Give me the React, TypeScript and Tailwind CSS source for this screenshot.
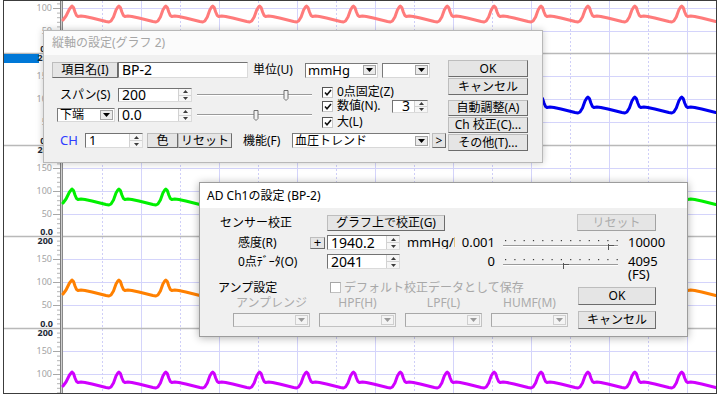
import React from 'react'

const font = "font-['Noto_Sans','Noto_Sans_CJK_JP',sans-serif]"

// graph tops (page y) and trace colours
const TOPS = [-38, 53, 145, 236, 328]
const COLORS = ['#ff7b7b', '#0000f0', '#00f000', '#ff8000', '#d000ff']

// one beat of the pulse wave, [dx from peak, dy from graph top]
const SHAPE: [number, number][] = [
  [0, 44], [1.5, 45.5], [3, 50], [4.5, 53.5], [6, 54.5], [9, 54], [13, 54.5],
  [20, 56], [28, 58], [34, 59.5], [37, 60], [39, 59], [41.5, 55], [44, 48], [46, 44.8],
]

function tracePoints(t: number) {
  const pts: string[] = [`63,${t + 58}`, `66,${t + 54}`, `69.5,${t + 47}`]
  for (let p = 72; p < 720; p += 46.9) {
    for (const [dx, dy] of SHAPE) {
      const x = p + dx
      if (x > 717) break
      pts.push(`${x.toFixed(1)},${t + dy}`)
    }
  }
  return pts.join(' ')
}

function Chart() {
  const vlines = Array.from({ length: 17 }, (_, k) => 63 + 39 * k).filter((x) => x > 63 && x < 716)
  return (
    <div className="w-[714px] h-[394px] border border-[#3c3c3c] overflow-hidden">
      <svg width="712" height="392" viewBox="4 1 712 392">
        <rect x="4" y="1" width="712" height="392" fill="#fff" />
        {TOPS.map((t) => (
          <g key={t}>
            {[23, 46, 69].map((d) => (
              <line key={d} x1="63" x2="716" y1={t + d + 0.5} y2={t + d + 0.5} stroke="#d4d4fb" strokeWidth="1" />
            ))}
          </g>
        ))}
        {vlines.map((x) => {
          const k = Math.round((x - 63) / 39)
          return (
            <line
              key={x}
              x1={x + 0.5}
              x2={x + 0.5}
              y1="1"
              y2="393"
              stroke={k % 2 ? '#cfcff8' : '#d4d4fb'}
              strokeDasharray={k % 2 ? '2 2' : undefined}
            />
          )
        })}
        {[...TOPS, 419].map((t) => (
          <line key={t} x1="4" x2="716" y1={t + 0.5} y2={t + 0.5} stroke="#b9b9b9" strokeWidth="1.5" />
        ))}
        <rect x="4" y="54" width="35" height="9" fill="#0078d7" />
        {TOPS.map((t) => (
          <g key={t} fontFamily="Noto Sans, sans-serif">
            {Array.from({ length: 20 }, (_, i) => t + i * 4.6).map((y) => (
              <line key={y} x1="57" x2="60" y1={y + 0.5} y2={y + 0.5} stroke="#b4b4b4" />
            ))}
            {[['150', 23], ['100', 46], ['50', 69]]
              .filter(([, d]) => t + +d > 4)
              .map(([s, d]) => (
                <g key={s}>
                  <line x1="53" x2="60" y1={t + +d + 0.5} y2={t + +d + 0.5} stroke="#a8a8a8" />
                  <text x="52" y={t + +d + 3} fontSize="9" fill="#a4a4a4" textAnchor="end">
                    {s}
                  </text>
                </g>
              ))}
            {t > 0 && (
              <>
                <text x="53" y={t - 1.5} fontSize="9" fontWeight="bold" fill="#1e2a36" textAnchor="end">
                  0.0
                </text>
                <text x="53" y={t + 8} fontSize="9" fontWeight="bold" fill="#1e2a36" textAnchor="end">
                  200
                </text>
              </>
            )}
          </g>
        ))}
        <rect x="60" y="1" width="3" height="392" fill="#cfcfcf" />
        <line x1="60.5" x2="60.5" y1="1" y2="393" stroke="#7c7c7c" />
        <line x1="62.5" x2="62.5" y1="1" y2="393" stroke="#8a8a8a" />
        {TOPS.map((t, i) => (
          <polyline
            key={t}
            points={tracePoints(t)}
            fill="none"
            stroke={COLORS[i]}
            strokeWidth="3"
            strokeLinejoin="round"
            strokeLinecap="round"
          />
        ))}
      </svg>
    </div>
  )
}

function Btn({ className = '', disabled = false, children }: { className?: string; disabled?: boolean; children?: React.ReactNode }) {
  return (
    <div
      className={`flex items-center justify-center shrink-0 border bg-[#e5e5e5] text-[12px] leading-none whitespace-nowrap ${
        disabled
          ? 'text-[#acacac] border-[#c4c4c4] border-r-[#a2a2a2] border-b-[#a2a2a2]'
          : 'text-black border-[#bdbdbd] border-r-[#6c6c6c] border-b-[#6c6c6c]'
      } ${className}`}
    >
      {children}
    </div>
  )
}

function TextBox({ className = '', children }: { className?: string; children?: React.ReactNode }) {
  return (
    <div className={`flex items-center shrink-0 border border-[#737373] border-r-[#dadada] border-b-[#dadada] bg-white pl-[3px] text-[14px] leading-none ${className}`}>
      {children}
    </div>
  )
}

function SpinArrows() {
  return (
    <div className="flex flex-col w-[13px] h-full border-l border-[#d2d2d2] bg-[#f6f6f6] shrink-0">
      <div className="flex-1 flex items-center justify-center">
        <svg width="5" height="3" viewBox="0 0 5 3">
          <path d="M0 3L2.5 0L5 3Z" fill="#3c3c3c" />
        </svg>
      </div>
      <div className="h-px bg-[#d2d2d2]" />
      <div className="flex-1 flex items-center justify-center">
        <svg width="5" height="3" viewBox="0 0 5 3">
          <path d="M0 0H5L2.5 3Z" fill="#3c3c3c" />
        </svg>
      </div>
    </div>
  )
}

function SpinBox({ className = '', children }: { className?: string; children?: React.ReactNode }) {
  return (
    <div className={`flex shrink-0 border border-[#737373] border-r-[#dadada] border-b-[#dadada] bg-white ${className}`}>
      <div className="flex-1 flex items-center pl-[3px] text-[14px] leading-none">{children}</div>
      <SpinArrows />
    </div>
  )
}

function Select({ className = '', disabled = false, children }: { className?: string; disabled?: boolean; children?: React.ReactNode }) {
  return (
    <div
      className={`flex items-center shrink-0 border ${
        disabled ? 'border-[#c2c2c2] border-t-[#a8a8a8] border-l-[#a8a8a8] bg-[#f3f3f3]' : 'border-[#7a7a7a] border-r-[#d8d8d8] border-b-[#d8d8d8] bg-white'
      } ${className}`}
    >
      <div className="flex-1 pl-[2px] text-[12px] leading-none whitespace-nowrap">{children}</div>
      <div className={`w-[13px] h-[10px] mr-[1px] flex items-center justify-center border ${disabled ? 'border-[#cfcfcf] bg-[#f4f4f4]' : 'border-[#a4a4a4] bg-[#ebebeb]'}`}>
        <svg width="7" height="4" viewBox="0 0 7 4">
          <path d="M0 0H7L3.5 4Z" fill={disabled ? '#9a9a9a' : '#000'} />
        </svg>
      </div>
    </div>
  )
}

function Check({ checked = false, disabled = false }: { checked?: boolean; disabled?: boolean }) {
  return (
    <div
      className={`w-[11px] h-[11px] shrink-0 border bg-white flex items-center justify-center ${
        disabled ? 'border-[#c0c0c0] border-t-[#a6a6a6] border-l-[#a6a6a6]' : 'border-[#c8c8c8] border-t-[#555] border-l-[#555]'
      }`}
    >
      {checked && (
        <svg width="8" height="7" viewBox="0 0 8 7">
          <path d="M1 3.5L3 5.7L7 1" stroke="#111" strokeWidth="1.6" fill="none" />
        </svg>
      )}
    </div>
  )
}

function Slider({ thumb }: { thumb: number }) {
  return (
    <svg width="115" height="14" viewBox="0 0 115 14" className="shrink-0">
      <line x1="0" x2="115" y1="6.5" y2="6.5" stroke="#9a9a9a" />
      <line x1="0" x2="115" y1="7.5" y2="7.5" stroke="#ffffff" />
      <path d={`M${thumb - 2} 2.5H${thumb + 2}V10.5L${thumb} 12.5L${thumb - 2} 10.5Z`} fill="#f2f2f2" stroke="#6e6e6e" />
    </svg>
  )
}

function TickSlider({ thumb }: { thumb: number }) {
  const dots = Array.from({ length: 13 }, (_, i) => 2 + i * 9.3)
  return (
    <svg width="115" height="15" viewBox="0 0 115 15" className="shrink-0">
      {dots.map((x) => (
        <rect key={x} x={x} y="5" width="1.2" height="1.2" fill="#3a3a3a" />
      ))}
      <line x1="0" x2="115" y1="10.5" y2="10.5" stroke="#9a9a9a" />
      <line x1="0" x2="115" y1="11.5" y2="11.5" stroke="#ffffff" />
      <line x1={thumb + 0.5} x2={thumb + 0.5} y1="9" y2="15" stroke="#555" />
      <line x1={thumb + 0.5} x2={thumb + 6} y1="10.5" y2="10.5" stroke="#555" />
    </svg>
  )
}

function AxisDialog() {
  return (
    <div className="absolute left-[43px] top-[30px] w-[500px] h-[133px] border border-[#b8b8b8] bg-[#f0f0f0] shadow-[0_0_7px_rgba(0,0,0,0.22)] flex flex-col text-[12px] leading-none">
      <div className="h-[24px] bg-[#fbfbfb] flex items-center pl-[8px] text-[#a6a6a6]">縦軸の設定(グラフ 2)</div>
      <div className="flex-1 flex pl-[8px]">
        <div className="w-[395px] flex flex-col pt-[7px]">
          <div className="flex items-center h-[16px]">
            <Btn className="w-[66px] h-[16px]">項目名(I)</Btn>
            <TextBox className="w-[130px] h-[16px]">BP-2</TextBox>
            <span className="ml-[5px] w-[52px]">単位(U)</span>
            <Select className="w-[73px] h-[15px]">
              <span className="text-[13px]">mmHg</span>
            </Select>
            <Select className="ml-[4px] w-[48px] h-[15px]" />
          </div>
          <div className="flex mt-[7px]">
            <div className="w-[270px] flex flex-col pt-[3px] gap-[6px]">
              <div className="flex items-center h-[14px]">
                <span className="w-[66px] pl-[8px]">スパン(S)</span>
                <SpinBox className="w-[74px] h-[14px]">200</SpinBox>
                <div className="ml-[5px]">
                  <Slider thumb={89} />
                </div>
              </div>
              <div className="flex items-center h-[14px]">
                <Select className="ml-[5px] w-[58px] h-[14px]">下端</Select>
                <SpinBox className="ml-[3px] w-[74px] h-[14px]">0.0</SpinBox>
                <div className="ml-[5px]">
                  <Slider thumb={59} />
                </div>
              </div>
            </div>
            <div className="flex flex-col">
              <div className="flex items-center h-[14px]">
                <Check checked />
                <span className="ml-[4px]">0点固定(Z)</span>
              </div>
              <div className="flex items-center h-[14px]">
                <Check checked />
                <span className="ml-[4px] w-[55px]">数値(N).</span>
                <SpinBox className="w-[36px] h-[13px]">
                  <span className="pl-[6px]">3</span>
                </SpinBox>
              </div>
              <div className="flex items-center h-[14px] mt-[2px]">
                <Check checked />
                <span className="ml-[4px]">大(L)</span>
              </div>
            </div>
          </div>
          <div className="flex items-center h-[15px] mt-[4px]">
            <span className="w-[33px] pl-[8px] text-[13px] text-[#2f3cff]">CH</span>
            <SpinBox className="w-[58px] h-[15px]">
              <span className="text-[13px]">1</span>
            </SpinBox>
            <Btn className="ml-[4px] w-[31px] h-[15px]">色</Btn>
            <Btn className="w-[54px] h-[15px]">リセット</Btn>
            <span className="ml-[11px] w-[49px]">機能(F)</span>
            <Select className="w-[138px] h-[15px]">血圧トレンド</Select>
            <Btn className="ml-[2px] w-[14px] h-[15px]">&gt;</Btn>
          </div>
        </div>
        <div className="ml-[1px] flex flex-col pt-[5px]">
          <Btn className="w-[80px] h-[17px]">OK</Btn>
          <Btn className="mt-[1px] w-[80px] h-[17px]">キャンセル</Btn>
          <Btn className="mt-[5px] w-[80px] h-[16px]">自動調整(A)</Btn>
          <Btn className="mt-[1px] w-[80px] h-[16px]">Ch 校正(C)...</Btn>
          <Btn className="mt-[1px] w-[80px] h-[17px]">その他(T)...</Btn>
        </div>
      </div>
    </div>
  )
}

function AdDialog() {
  return (
    <div className="absolute left-[199px] top-[182px] w-[489px] h-[155px] border border-[#9c9c9c] bg-[#f0f0f0] shadow-[0_1px_8px_rgba(0,0,0,0.3)] flex flex-col text-[12px] leading-none">
      <div className="h-[25px] bg-white flex items-center pl-[7px] text-black">AD Ch1の設定 (BP-2)</div>
      <div className="flex-1 flex flex-col">
        <div className="flex items-center h-[17px] mt-[6px]">
          <span className="w-[127px] pl-[20px]">センサー校正</span>
          <Btn className="w-[118px] h-[16px]">グラフ上で校正(G)</Btn>
          <Btn disabled className="ml-[132px] w-[79px] h-[17px]">
            リセット
          </Btn>
        </div>
        <div className="flex items-center h-[15px] mt-[4px]">
          <span className="w-[110px] pl-[38px]">感度(R)</span>
          <Btn className="w-[15px] h-[12px] text-[13px]">+</Btn>
          <SpinBox className="ml-[2px] w-[73px] h-[15px]">1940.2</SpinBox>
          <span className="ml-[7px] w-[48px] overflow-hidden whitespace-nowrap text-[13px]">mmHg/l</span>
          <span className="w-[40px] text-right text-[13px]">0.001</span>
          <div className="ml-[8px]">
            <TickSlider thumb={105} />
          </div>
          <span className="ml-[10px] text-[13px]">10000</span>
        </div>
        <div className="flex items-center h-[15px] mt-[4px]">
          <span className="w-[127px] pl-[38px]">0点ﾃﾞｰﾀ(O)</span>
          <SpinBox className="w-[73px] h-[15px]">2041</SpinBox>
          <span className="w-[95px] text-right text-[13px]">0</span>
          <div className="ml-[8px]">
            <TickSlider thumb={60} />
          </div>
          <span className="ml-[10px] text-[13px]">4095</span>
        </div>
        <div className="h-[11px] mt-[1px] pl-[428px] flex items-end text-[13px]">(FS)</div>
        <div className="flex">
          <div className="w-[378px] flex flex-col">
            <div className="flex items-center h-[13px]">
              <span className="w-[130px] pl-[18px]">アンプ設定</span>
              <Check disabled />
              <span className="ml-[3px] text-[#a8a8a8]">デフォルト校正データとして保存</span>
            </div>
            <div className="flex gap-[9px] pl-[33px] mt-[3px] h-[12px] text-[#ababab]">
              <span className="w-[77px] text-center">アンプレンジ</span>
              <span className="w-[77px] text-center">HPF(H)</span>
              <span className="w-[77px] text-center">LPF(L)</span>
              <span className="w-[77px] text-center">HUMF(M)</span>
            </div>
            <div className="flex gap-[9px] pl-[33px] mt-[4px]">
              <Select disabled className="w-[77px] h-[14px]" />
              <Select disabled className="w-[77px] h-[14px]" />
              <Select disabled className="w-[77px] h-[14px]" />
              <Select disabled className="w-[77px] h-[14px]" />
            </div>
          </div>
          <div className="flex flex-col pt-[6px]">
            <Btn className="w-[78px] h-[18px]">OK</Btn>
            <Btn className="mt-[6px] w-[78px] h-[18px]">キャンセル</Btn>
          </div>
        </div>
      </div>
    </div>
  )
}

export default function App() {
  return (
    <div className={`relative w-[720px] h-[395px] bg-white pl-[3px] overflow-hidden ${font}`}>
      <Chart />
      <AxisDialog />
      <AdDialog />
    </div>
  )
}
